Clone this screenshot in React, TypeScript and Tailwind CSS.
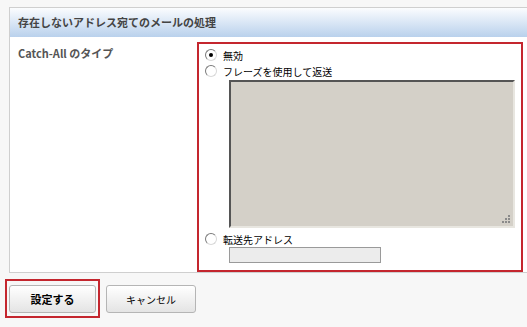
import React from "react";

const Radio = ({ checked }: { checked?: boolean }) => (
  <span className="relative inline-flex h-[12px] w-[12px] shrink-0 items-center justify-center rounded-full border border-t-[#7a7a7a] border-l-[#7a7a7a] border-r-[#d8d8d8] border-b-[#d8d8d8] bg-white">
    {checked && <span className="h-[4px] w-[4px] rounded-full bg-black" />}
  </span>
);

const App = () => {
  return (
    <div className="h-[327px] w-[527px] overflow-hidden bg-[#f7f7f7] pt-[7px] font-['Noto_Sans_CJK_JP','Noto_Sans',sans-serif] text-[#333]">
      <div className="ml-[9px] border border-r-0 border-[#cfcfcf] bg-white">
        <div className="flex h-[29px] items-center bg-gradient-to-b from-[#fbfcfe] to-[#b9d1ec] pl-[8px] text-[11px] font-bold text-[#444]">
          存在しないアドレス宛てのメールの処理
        </div>
        <div className="flex pt-[5px]">
          <div className="w-[187px] shrink-0 pl-[8px] pt-[3px] text-[11px] font-bold text-[#555]">
            Catch-All のタイプ
          </div>
          <div className="w-[326px] border-2 border-[#c4262e] pb-[7px] pl-[6px] pt-[3px] text-[10px] text-black">
            <label className="flex h-[16px] items-center gap-[6px]">
              <Radio checked />
              無効
            </label>
            <label className="flex h-[16px] items-center gap-[6px]">
              <Radio />
              フレーズを使用して返送
            </label>
            <div className="relative ml-[24px] mt-[1px] h-[148px] w-[286px] border-2 border-t-[#555] border-l-[#555] border-r-[#e8e6e0] border-b-[#e8e6e0] bg-[#d4d0c8]">
              <svg className="absolute bottom-[2px] right-[2px]" width="10" height="10" viewBox="0 0 10 10">
                <g fill="#8a8a8a">
                  <rect x="7" y="1" width="2" height="2" />
                  <rect x="4" y="4" width="2" height="2" />
                  <rect x="7" y="4" width="2" height="2" />
                  <rect x="1" y="7" width="2" height="2" />
                  <rect x="4" y="7" width="2" height="2" />
                  <rect x="7" y="7" width="2" height="2" />
                </g>
              </svg>
            </div>
            <label className="mt-[3px] flex h-[16px] items-center gap-[6px]">
              <Radio />
              転送先アドレス
            </label>
            <div className="ml-[24px] h-[16px] w-[152px] border border-[#9a9a9a] bg-[#ececec]" />
          </div>
        </div>
      </div>
      <div className="mt-[6px] flex items-start pl-[5px]">
        <div className="border-2 border-[#c4262e] pb-[3px] pl-[2px] pr-[2px] pt-[4px]">
          <button className="flex h-[28px] w-[87px] items-center justify-center rounded-[3px] border border-[#b5b5b5] bg-gradient-to-b from-white to-[#e4e4e4] text-[11px] font-bold text-black">
            設定する
          </button>
        </div>
        <button className="ml-[6px] mt-[6px] flex h-[28px] w-[90px] items-center justify-center rounded-[3px] border border-[#b5b5b5] bg-gradient-to-b from-white to-[#e4e4e4] text-[10px] text-black">
          キャンセル
        </button>
      </div>
    </div>
  );
};

export default App;
